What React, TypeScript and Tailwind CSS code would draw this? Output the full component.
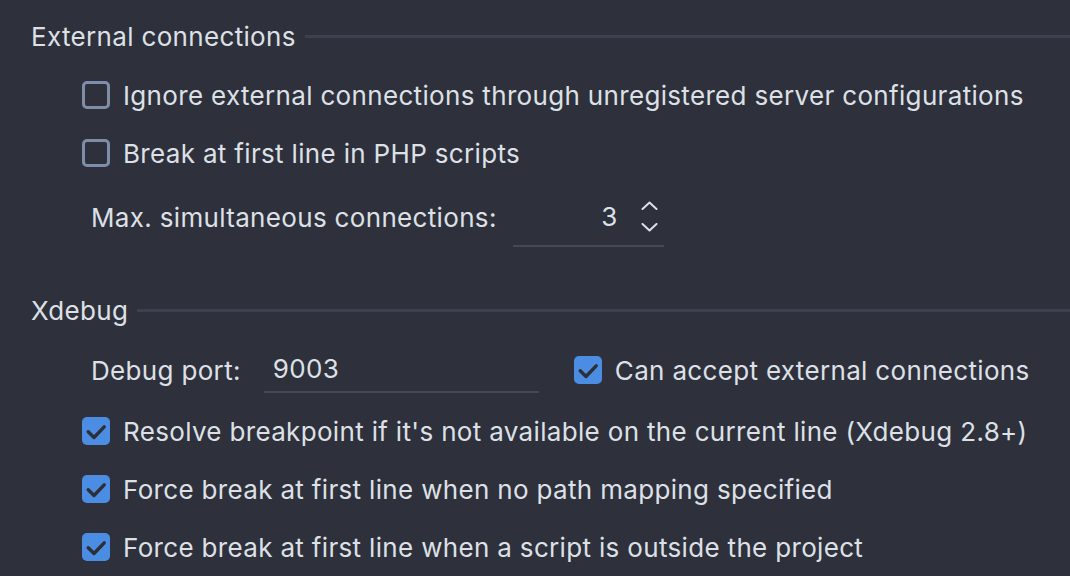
import React from "react";

const Checkbox = ({ checked }: { checked?: boolean }) =>
    checked ? (
        <span className="w-[28px] h-[28px] rounded-[5px] bg-[#4c8de4] flex items-center justify-center shrink-0">
            <svg width="28" height="28" viewBox="0 0 28 28" fill="none">
                <path d="M6.2 14.8 L12 20.5 L22.2 9.8" stroke="#2c2f37" strokeWidth="3.4" strokeLinecap="round" strokeLinejoin="round" />
            </svg>
        </span>
    ) : (
        <span className="w-[28px] h-[28px] rounded-[5px] border-[3px] border-[#7f8ea8] shrink-0" />
    );

const CheckRow = ({ label, checked }: { label: string; checked?: boolean }) => (
    <div className="h-[58px] flex items-center pl-[82px] gap-[13px]">
        <Checkbox checked={checked} />
        <span>{label}</span>
    </div>
);

const SectionTitle = ({ title }: { title: string }) => (
    <div className="h-[40px] flex items-center pl-[31px]">
        <span>{title}</span>
        <div className="flex-1 h-[3px] bg-[#3d414f] ml-[9px]" />
    </div>
);

export default function App() {
    return (
        <div
            className="w-[1070px] h-[576px] overflow-hidden bg-[#2e313b] text-[#dde0e6] text-[26px] tracking-[0.33px] pt-[16px]"
            style={{ fontFamily: "Inter, 'Noto Sans', sans-serif" }}
        >
            <SectionTitle title="External connections" />
            <div className="mt-[10px]">
                <CheckRow label="Ignore external connections through unregistered server configurations" />
                <CheckRow label="Break at first line in PHP scripts" />
            </div>

            <div className="mt-[5px] h-[60px] flex items-center pl-[91px]">
                <span>Max. simultaneous connections:</span>
                <div className="ml-[16px] w-[151px] h-[60px] border-b-2 border-[#444857] flex items-center justify-end pr-[6px]">
                    <span>3</span>
                    <div className="ml-[23px] flex flex-col items-center gap-[13px]">
                        <svg width="17" height="9" viewBox="0 0 17 9" fill="none">
                            <path d="M1.5 8 L8.5 1.5 L15.5 8" stroke="#dde0e6" strokeWidth="2" strokeLinecap="round" strokeLinejoin="round" />
                        </svg>
                        <svg width="17" height="9" viewBox="0 0 17 9" fill="none">
                            <path d="M1.5 1 L8.5 7.5 L15.5 1" stroke="#dde0e6" strokeWidth="2" strokeLinecap="round" strokeLinejoin="round" />
                        </svg>
                    </div>
                </div>
            </div>

            <div className="mt-[43px]">
                <SectionTitle title="Xdebug" />
            </div>

            <div className="mt-[11px] h-[58px] flex items-center pl-[91px]">
                <span>Debug port:</span>
                <div className="ml-[23px] w-[275px] h-[47px] mt-[-1px] border-b-2 border-[#444857] flex items-center pl-[9px]">
                    9003
                </div>
                <div className="ml-[35px] flex items-center gap-[13px]">
                    <Checkbox checked />
                    <span>Can accept external connections</span>
                </div>
            </div>

            <div className="mt-[3px]">
                <CheckRow checked label="Resolve breakpoint if it's not available on the current line (Xdebug 2.8+)" />
                <CheckRow checked label="Force break at first line when no path mapping specified" />
                <CheckRow checked label="Force break at first line when a script is outside the project" />
            </div>
        </div>
    );
}
